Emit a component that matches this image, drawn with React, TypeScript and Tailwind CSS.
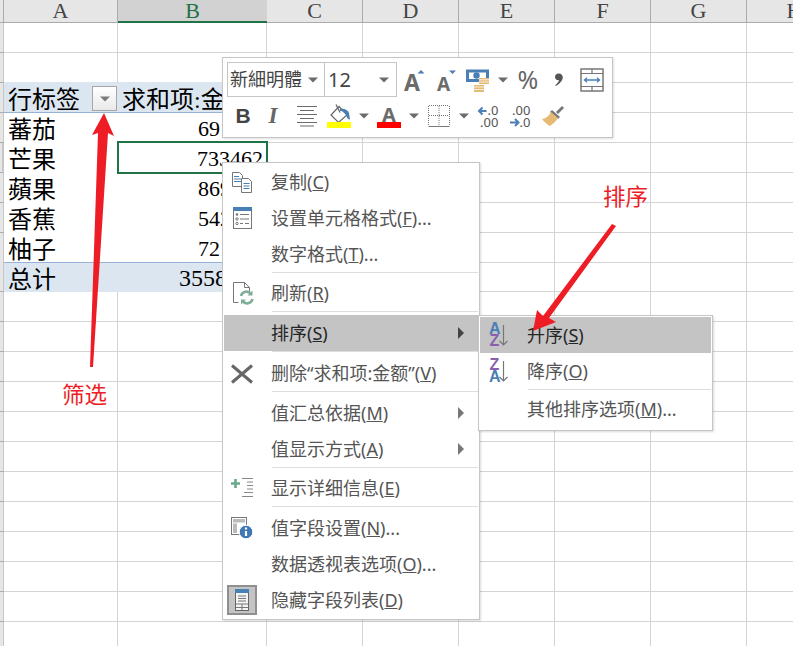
import React from "react";

const cjk = "font-['Noto_Sans','Noto_Sans_CJK_SC',sans-serif]";
const GRAY = "#6b6b6b";
const BLUE = "#4a7fb5";
const TAN = "#e6b975";

function Caret({ color = "#6b6b6b" }: { color?: string }) {
  return (
    <svg width="10" height="6" viewBox="0 0 10 6">
      <path d="M0 0.5h10L5 5.500z" fill={color} />
    </svg>
  );
}

function Cell({ className = "", children }: { className?: string; children?: React.ReactNode }) {
  return <div className={`h-full shrink-0 overflow-visible whitespace-nowrap ${className}`}>{children}</div>;
}

const plainCols = ["w-[96px]", "w-[96px]", "w-[96px]", "w-[96px]", "w-[96px]", "w-[96px]", "w-[96px]"];

function Columns() {
  return (
    <>
      {plainCols.map((w, i) => (
        <Cell key={i} className={`${w} border-r border-b border-[#d4d4d4]`} />
      ))}
    </>
  );
}

function RowStrip({ active = false }: { active?: boolean }) {
  return (
    <div
      className={`w-[4px] h-full shrink-0 bg-[#e6e6e6] border-b border-r border-b-[#ababab] border-r-[#c6c6c6] ${
        active ? "border-r-2 border-r-[#217346]" : ""
      }`}
    />
  );
}

function GridRow() {
  return (
    <div className="flex h-[30px]">
      <RowStrip />
      <Cell className="w-[114px] border-r border-b border-[#d4d4d4]" />
      <Cell className="w-[149px] border-r border-b border-[#d4d4d4]" />
      <Columns />
    </div>
  );
}

const pivotRows = [
  { label: "蕃茄", value: "691204" },
  { label: "芒果", value: "733462", selected: true },
  { label: "蘋果", value: "869120" },
  { label: "香蕉", value: "542318" },
  { label: "柚子", value: "721906" },
];

function Sheet() {
  const heads = ["C", "D", "E", "F", "G", "H"];
  return (
    <div className="flex flex-col">
      <div className="flex h-[23px] overflow-hidden bg-[#e6e6e6] text-[22px] leading-[22px] text-[#444] font-['Liberation_Serif',serif]">
        <div className="w-[4px] shrink-0 border-r border-b border-[#ababab]" />
        <div className="w-[114px] shrink-0 border-r border-b border-[#ababab] text-center">A</div>
        <div className="w-[149px] shrink-0 bg-[#d2d2d2] border-b-2 border-[#217346] text-center text-[#217346]">B</div>
        {heads.map((h) => (
          <div key={h} className="w-[96px] shrink-0 border-r border-b border-[#ababab] text-center">
            {h}
          </div>
        ))}
      </div>

      <GridRow />
      <div className="flex h-[30px]">
        <RowStrip />
        <Cell className="w-[114px] border-r border-b border-r-[#d4d4d4] border-b-[#dce6f1]" />
        <Cell className="w-[149px] border-r border-b border-r-[#d4d4d4] border-b-[#dce6f1]" />
        <Columns />
      </div>

      {/* pivot header */}
      <div className={`flex h-[30px] text-[24px] leading-[32px] text-black ${cjk}`}>
        <RowStrip />
        <Cell className="relative w-[114px] bg-[#dce6f1] border-b border-[#95b3d7] pl-1">
          行标签
          <span className="absolute left-[88px] top-[3px] flex h-[25px] w-[25px] items-center justify-center border border-[#a6a6a6] bg-gradient-to-b from-white to-[#e9e9e9]">
            <Caret color="#7a7a7a" />
          </span>
        </Cell>
        <Cell className="w-[149px] bg-[#dce6f1] border-b border-[#95b3d7] pl-1 font-['Liberation_Serif','Noto_Sans_CJK_SC',serif]">
          <span className={cjk}>求和项</span>:<span className={cjk}>金额</span>
        </Cell>
        <Columns />
      </div>

      {/* pivot body */}
      {pivotRows.map((r) => (
        <div key={r.label} className={`flex h-[30px] text-[24px] leading-[32px] text-black ${cjk}`}>
          <RowStrip active={r.selected} />
          <Cell className="w-[114px] pl-1 border-b border-white">{r.label}</Cell>
          {r.selected ? (
            <div className="relative -top-[2px] -ml-px -mr-px h-[33px] w-[151px] shrink-0 border-2 border-[#217346] pr-[3px] text-right text-[22px] leading-[32px] font-['Liberation_Serif',serif]">
              {r.value}
            </div>
          ) : (
            <Cell className="w-[149px] pr-[3px] text-right text-[22px] border-b border-white font-['Liberation_Serif',serif]">
              {r.value}
            </Cell>
          )}
          <Columns />
        </div>
      ))}
      {/* the total row's rule overlaps the last body row by a pixel */}
      <div className={`flex h-[30px] -mt-px text-[24px] leading-[31px] text-black ${cjk}`}>
        <RowStrip />
        <Cell className="w-[114px] bg-[#dce6f1] border-t border-[#95b3d7] pl-1">总计</Cell>
        <Cell className="w-[149px] bg-[#dce6f1] border-t border-[#95b3d7] pr-[4px] text-right font-['Liberation_Serif',serif]">
          3558010
        </Cell>
        <Columns />
      </div>

      {Array.from({ length: 13 }).map((_, i) => (
        <GridRow key={i} />
      ))}
    </div>
  );
}

/* ---------- mini toolbar ---------- */

function Slot({ w, children }: { w: string; children?: React.ReactNode }) {
  return <div className={`${w} shrink-0 flex items-center justify-center`}>{children}</div>;
}

const GrowFont = () => (
  <svg width="30" height="30" viewBox="0 0 30 30">
    <text x="13" y="26" textAnchor="middle" fontSize="23" fontWeight="700" fill={GRAY} fontFamily="Noto Sans">A</text>
    <path d="M18.500 8.500h7L22 5z" fill={BLUE} />
  </svg>
);
const ShrinkFont = () => (
  <svg width="30" height="30" viewBox="0 0 30 30">
    <text x="12.500" y="26" textAnchor="middle" fontSize="19" fontWeight="700" fill={GRAY} fontFamily="Noto Sans">A</text>
    <path d="M18 5.500h7L21.500 9z" fill={BLUE} />
  </svg>
);
const Money = () => (
  <svg width="30" height="30" viewBox="0 0 30 30">
    <rect x="4.500" y="6" width="20" height="9.500" fill="#fff" stroke={BLUE} strokeWidth="3" />
    <circle cx="13.500" cy="10.500" r="3.200" fill={BLUE} />
    <rect x="16" y="13" width="10" height="6" fill={TAN} />
    <path d="M16 14.800h10M16 17h10" stroke="#fff" strokeWidth=".8" />
    <rect x="11" y="20" width="10" height="7" fill={TAN} />
    <path d="M11 22h10M11 24.500h10" stroke="#fff" strokeWidth=".8" />
  </svg>
);
const ColumnWidth = () => (
  <svg width="26" height="26" viewBox="0 0 26 26">
    <rect x="2" y="2" width="22" height="22" fill="none" stroke="#777" strokeWidth="1.500" />
    <path d="M2 6.500h22M2 19.500h22M13 2v4.500M13 19.500V24" stroke="#777" strokeWidth="1.200" fill="none" />
    <path d="M5.500 13h15M8 10.800L5.500 13 8 15.200M18 10.800l2.500 2.200-2.500 2.200" stroke={BLUE} strokeWidth="1.300" fill="none" />
  </svg>
);
const Comma = () => (
  <svg width="10" height="15" viewBox="0 0 10 14">
    <path d="M4.500 1C7.500 1 8.800 3 8.800 4.800 8.800 8 5.500 11.500 1.800 13.500L1.300 12.700C3.500 10.800 4.800 9.200 5 7.600 2.800 8 1 6.600 1 4.400 1 2.400 2.600 1 4.500 1z" fill="#555" />
  </svg>
);
const AlignCenter = () => (
  <svg width="22" height="22" viewBox="0 0 22 22">
    <path d="M1 1.500h20M4 5.500h14M1 9.500h20M4 13.500h14M1 17.500h20M4 21h14" stroke={GRAY} fill="none" />
  </svg>
);
const FillColor = () => (
  <svg width="24" height="24" viewBox="0 0 24 24">
    <path d="M12 2.500L4 11l7.500 7.500L20 11z" fill="#fff" stroke="#666" strokeWidth="1.200" />
    <path d="M9 .5l4 8" stroke="#666" strokeWidth="1.200" />
    <path d="M13 5c4-1 8 1 9 4l1 6.500c-2 0-3-1.500-3.500-3.500-.5-3-3.500-5-6.500-5z" fill={BLUE} />
    <rect x="0" y="18" width="24" height="6" fill="#ffff00" />
  </svg>
);
const FontColor = () => (
  <svg width="24" height="24" viewBox="0 0 24 24">
    <text x="12" y="17.500" textAnchor="middle" fontSize="20" fontWeight="700" fill={GRAY} fontFamily="Noto Sans">A</text>
    <rect x="0" y="18" width="24" height="6" fill="#ff0000" />
  </svg>
);
const Borders = () => (
  <svg width="22" height="22" viewBox="0 0 22 22">
    <path d="M1 .5h20M.5 1v20M21.500 1v20M11 1v20M1 10.500h20" stroke="#777" strokeDasharray="1 1" fill="none" />
    <path d="M.5 21.500h21" stroke="#777" fill="none" />
  </svg>
);
const DecreaseDecimal = () => (
  <svg width="24" height="24" viewBox="0 0 24 24" fontFamily="Noto Sans" fontSize="13" fill="#555">
    <path d="M9.500 7H2M5.500 3.500L2 7l3.500 3.500" stroke={BLUE} strokeWidth="2" fill="none" />
    <text x="10.500" y="11">.0</text>
    <text x="3" y="22.500">.00</text>
  </svg>
);
const IncreaseDecimal = () => (
  <svg width="24" height="24" viewBox="0 0 24 24" fontFamily="Noto Sans" fontSize="13" fill="#555">
    <text x="3" y="11">.00</text>
    <path d="M1 18.500h8M6 15l3.500 3.500L6 22" stroke={BLUE} strokeWidth="2" fill="none" />
    <text x="10.500" y="23">.0</text>
  </svg>
);
const Brush = () => (
  <svg width="24" height="22" viewBox="0 0 24 22">
    <path d="M15 7l6-6 2 2-6 6z" fill="#777" />
    <path d="M11 5l8 7-2 2-8-7z" fill="#777" />
    <path d="M10 7l7 6c-2 3-5 6-8 8-2-1-6-4-8-7 3 0 7-3 9-7z" fill={TAN} />
  </svg>
);

function MiniToolbar() {
  return (
    <div className="absolute left-[222px] top-[57px] h-[81px] w-[391px] border border-[#c6c6c6] bg-white pl-[4px] pt-[4px] shadow-[1px_1px_2px_rgba(0,0,0,0.12)]">
      <div className={`flex h-[35px] ${cjk}`}>
        <div className="flex h-[35px] w-[98px] shrink-0 items-center justify-between border border-[#c6c6c6] pl-[2px] pr-[6px] text-[18px] text-[#444]">
          <span>新細明體</span>
          <Caret />
        </div>
        <div className="-ml-px flex h-[35px] w-[73px] shrink-0 items-center justify-between border border-[#c6c6c6] pl-[3px] pr-[7px] text-[20px] text-[#444]">
          <span>12</span>
          <Caret />
        </div>
        <Slot w="w-[34px]"><GrowFont /></Slot>
        <Slot w="w-[30px]"><ShrinkFont /></Slot>
        <Slot w="w-[34px]"><Money /></Slot>
        <Slot w="w-[16px]"><Caret /></Slot>
        <Slot w="w-[34px]">
          <span className="text-[25px] leading-none text-[#666]">%</span>
        </Slot>
        <Slot w="w-[28px]"><Comma /></Slot>
        <Slot w="w-[38px]"><ColumnWidth /></Slot>
      </div>
      <div className="flex h-[38px] items-center">
        <Slot w="w-[32px]">
          <span className="font-['Liberation_Sans',sans-serif] text-[21px] font-bold text-[#444]">B</span>
        </Slot>
        <Slot w="w-[28px]">
          <span className="font-['Liberation_Serif',serif] text-[23px] font-bold italic text-[#666]">I</span>
        </Slot>
        <Slot w="w-[40px]"><AlignCenter /></Slot>
        <Slot w="w-[24px]"><FillColor /></Slot>
        <Slot w="w-[26px]"><Caret /></Slot>
        <Slot w="w-[24px]"><FontColor /></Slot>
        <Slot w="w-[26px]"><Caret /></Slot>
        <Slot w="w-[24px]"><Borders /></Slot>
        <Slot w="w-[26px]"><Caret /></Slot>
        <Slot w="w-[24px]"><DecreaseDecimal /></Slot>
        <Slot w="w-[40px]"><IncreaseDecimal /></Slot>
        <Slot w="w-[24px]"><Brush /></Slot>
      </div>
    </div>
  );
}

/* ---------- context menu icons ---------- */

const CopyIcon = () => (
  <svg width="24" height="24" viewBox="0 0 24 24" fill="none">
    <path d="M2.500 2.500h7l3 3v11h-10z" fill="#fff" stroke="#777" />
    <path d="M4 6.500h5M4 9h7M4 11.500h7" stroke={BLUE} />
    <path d="M11.500 8.500h7l3 3v11h-10z" fill="#fff" stroke="#777" />
    <path d="M13.500 13.500h6M13.500 16h6M13.500 18.500h6" stroke={BLUE} />
  </svg>
);
const FormatIcon = () => (
  <svg width="24" height="24" viewBox="0 0 24 24" fill="none">
    <rect x="3.500" y="1.500" width="18" height="21" stroke="#777" fill="#fff" />
    <rect x="3" y="1" width="19" height="4" fill={BLUE} />
    <circle cx="7" cy="8.500" r="1.300" fill="#777" />
    <circle cx="7" cy="13" r="1.200" stroke="#777" />
    <circle cx="7" cy="17.500" r="1.200" stroke="#777" />
    <path d="M10 8.500h9M10 13h9M10 17.500h3M15 17.500h4" stroke="#777" />
  </svg>
);
const RefreshIcon = () => (
  <svg width="24" height="24" viewBox="0 0 24 24" fill="none">
    <path d="M3.500 1.500h11l5 5v4M3.500 1.500v20h5M14.500 1.500v5h5" stroke="#777" />
    <path d="M11 15a5.600 5.600 0 0 1 10-2M22.500 18a5.600 5.600 0 0 1-10 2" stroke="#7fae98" strokeWidth="2.600" />
    <path d="M22.500 9.500v5h-5zM11 23.500v-5h5z" fill="#7fae98" />
  </svg>
);
const RemoveIcon = () => (
  <svg width="24" height="24" viewBox="0 0 24 24" fill="none">
    <path d="M2 4.500l20 17M22 4.500l-20 17" stroke="#666" strokeWidth="3" />
  </svg>
);
const DetailIcon = () => (
  <svg width="24" height="24" viewBox="0 0 24 24" fill="none">
    <path d="M1 7.500h9M5.500 3v9" stroke="#6aa88d" strokeWidth="2.600" />
    <path d="M12 2.500h11M17 6h6M17 9.500h6M17 13h6M14 16.500h9M12 20.500h11" stroke="#888" />
  </svg>
);
const FieldIcon = () => (
  <svg width="24" height="24" viewBox="0 0 24 24" fill="none">
    <rect x="1.500" y="1.500" width="15" height="17" stroke="#777" />
    <rect x="3" y="3" width="12" height="3.500" fill="#bbb" />
    <rect x="3" y="7.500" width="4" height="9.500" fill="#bbb" />
    <circle cx="16" cy="16" r="6.800" fill="#3f78b4" stroke="#fff" />
    <path d="M16 15v5M16 11.500v2" stroke="#fff" strokeWidth="2.200" />
  </svg>
);
const ListIcon = () => (
  <span className="-ml-[3px] flex h-[30px] w-[30px] items-center justify-center border-2 border-[#8f8f8f] bg-[#c4c4c4]">
    <svg width="14" height="22" viewBox="0 0 14 22" fill="none">
      <rect x=".5" y=".5" width="13" height="21" fill="#f4f4f4" stroke="#666" />
      <rect x="0" y="0" width="14" height="4" fill={BLUE} />
      <path d="M3 7h8M3 9.500h8M3 12h8M1 15h12M1 18.500h12M7 15v6" stroke="#777" />
    </svg>
  </span>
);
const SortAsc = () => (
  <svg width="24" height="26" viewBox="0 0 24 26" fontFamily="Liberation Sans" fontWeight="700" fontSize="16">
    <text x="3" y="12" fill={BLUE}>A</text>
    <text x="3.500" y="24" fill="#8a5fb0">Z</text>
    <path d="M17.500 3v20M13.500 19l4 4 4-4" stroke="#777" strokeWidth="1.200" fill="none" />
  </svg>
);
const SortDesc = () => (
  <svg width="24" height="26" viewBox="0 0 24 26" fontFamily="Liberation Sans" fontWeight="700" fontSize="16">
    <text x="3.500" y="12" fill="#8a5fb0">Z</text>
    <text x="3" y="24" fill={BLUE}>A</text>
    <path d="M17.500 3v20M13.500 19l4 4 4-4" stroke="#777" strokeWidth="1.200" fill="none" />
  </svg>
);

function Item({
  icon,
  hot = false,
  sub = false,
  children,
}: {
  icon?: React.ReactNode;
  hot?: boolean;
  sub?: boolean;
  children: React.ReactNode;
}) {
  return (
    <div className={`relative flex h-[36px] items-center ${hot ? "bg-[#c4c4c4] text-[#262626]" : "text-[#555]"}`}>
      <div className="flex w-[47px] shrink-0 items-center pl-[6px]">{icon}</div>
      <span className="whitespace-nowrap">{children}</span>
      {sub && (
        <svg className="absolute right-[14px] top-[12px]" width="6" height="12" viewBox="0 0 6 12">
          <path d="M0 0l6 6-6 6z" fill={hot ? "#444" : "#777"} />
        </svg>
      )}
    </div>
  );
}

function Sep({ className = "h-[4px]" }: { className?: string }) {
  return (
    <div className={`ml-[48px] flex items-start ${className}`}>
      <div className="h-[1px] w-full bg-[#dedede]" />
    </div>
  );
}

function ContextMenu() {
  return (
    <div className={`absolute left-[222px] top-[162px] w-[258px] border border-[#c6c6c6] bg-white p-px text-[18px] shadow-[1px_1px_2px_rgba(0,0,0,0.15)] ${cjk}`}>
      <Item icon={<CopyIcon />}>复制(<u>C</u>)</Item>
      <Item icon={<FormatIcon />}>设置单元格格式(<u>F</u>)...</Item>
      <Item>数字格式(<u>T</u>)...</Item>
      <Sep className="h-[3px]" />
      <Item icon={<RefreshIcon />}>刷新(<u>R</u>)</Item>
      <Sep />
      <Item hot sub>排序(<u>S</u>)</Item>
      <Sep />
      <Item icon={<RemoveIcon />}>删除“求和项:金额”(<u>V</u>)</Item>
      <Sep />
      <Item sub>值汇总依据(<u>M</u>)</Item>
      <Item sub>值显示方式(<u>A</u>)</Item>
      <Sep className="h-[3px]" />
      <Item icon={<DetailIcon />}>显示详细信息(<u>E</u>)</Item>
      <Sep />
      <Item icon={<FieldIcon />}>值字段设置(<u>N</u>)...</Item>
      <Item>数据透视表选项(<u>O</u>)...</Item>
      <Item icon={<ListIcon />}>隐藏字段列表(<u>D</u>)</Item>
    </div>
  );
}

function SortMenu() {
  return (
    <div className={`absolute left-[478px] top-[315px] w-[235px] border border-[#c6c6c6] bg-white p-px pb-[3px] text-[18px] shadow-[1px_1px_2px_rgba(0,0,0,0.15)] ${cjk}`}>
      <Item hot icon={<SortAsc />}>升序(<u>S</u>)</Item>
      <Item icon={<SortDesc />}>降序(<u>O</u>)</Item>
      <Sep className="h-[2px]" />
      <Item>其他排序选项(<u>M</u>)...</Item>
    </div>
  );
}

export default function App() {
  return (
    <div className="relative h-[646px] w-[793px] overflow-hidden bg-white">
      <Sheet />
      <MiniToolbar />
      <ContextMenu />
      <SortMenu />

      {/* callout arrows drawn over the sheet */}
      <svg className="pointer-events-none absolute left-0 top-0" width="793" height="646" viewBox="0 0 793 646">
        <path d="M104 113L114 136 108 133 93 367 90 367 98 133 92 135z" fill="#ee1c25" />
        <path d="M533 331L537 310 543 316 612 224 616 226 549 318 556 322z" fill="#ee1c25" />
      </svg>
      <span className={`absolute left-[62px] top-[379px] text-[22.5px] leading-[32px] text-[#ee1c25] ${cjk}`}>筛选</span>
      <span className={`absolute left-[603px] top-[181px] text-[22.5px] leading-[32px] text-[#ee1c25] ${cjk}`}>排序</span>
    </div>
  );
}
